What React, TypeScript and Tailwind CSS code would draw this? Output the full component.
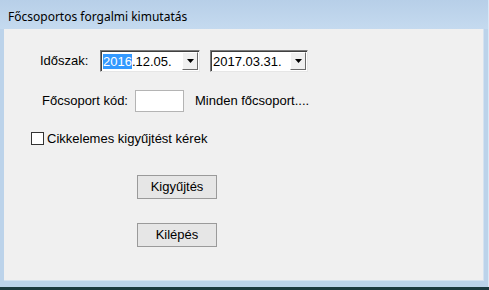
const ui = { fontFamily: '"Liberation Sans", Arial, sans-serif' };
const title = { fontFamily: '"Noto Sans", "Open Sans", sans-serif' };

function Arrow() {
  return (
    <svg width="7" height="4" viewBox="0 0 7 4">
      <path d="M0 0h7L3.5 4z" fill="#000" />
    </svg>
  );
}

function Combo({ value, highlight, width }: { value: string; highlight?: boolean; width: string }) {
  const head = highlight ? value.slice(0, 4) : "";
  const rest = highlight ? value.slice(4) : value;
  return (
    <div
      className={`${width} h-[22px] flex items-center bg-white border border-t-[#7a7a7a] border-l-[#7a7a7a] border-b-[#e6e6e6] border-r-[#e6e6e6] shadow-[inset_1px_1px_0_#404040]`}
    >
      <div className="flex-1 pl-[2px] text-[13px] leading-none text-black">
        {highlight && <span className="bg-[#3399ff] text-white">{head}</span>}
        {rest}
      </div>
      <div className="w-[16px] h-[18px] mr-[1px] flex items-center justify-center bg-[#f0f0f0] border border-t-white border-l-white border-b-[#696969] border-r-[#696969]">
        <Arrow />
      </div>
    </div>
  );
}

function Button({ label }: { label: string }) {
  return (
    <button className="w-[80px] h-[24px] bg-[#e6e6e6] border border-[#9a9a9a] text-[13px] text-black leading-none">
      {label}
    </button>
  );
}

export default function App() {
  return (
    <div className="w-[489px] h-[290px] flex flex-col bg-[#1c3a3f]" style={ui}>
      <div className="h-[287px] flex flex-col bg-[#bcd3ea] border-r border-[#d9e8f6]">
        {/* Title bar */}
        <div
          className="h-[29px] shrink-0 pl-[8px] pt-[8px] text-[12px] text-black bg-gradient-to-b from-[#b7cfe8] to-[#c5daef]"
          style={title}
        >
          Főcsoportos forgalmi kimutatás
        </div>

        <div className="flex-1 flex px-[4px] pb-[6px]">
          <div className="flex-1 bg-[#f0f0f0] border-r border-b border-[#d4e2f1] text-[13px] text-black">
            {/* Időszak */}
            <div className="flex items-center mt-[21px] ml-[36px]">
              <span className="w-[60px]">Időszak:</span>
              <Combo value="2016.12.05." highlight width="w-[100px]" />
              <div className="w-[10px]" />
              <Combo value="2017.03.31." width="w-[98px]" />
            </div>

            {/* Főcsoport kód */}
            <div className="flex items-center mt-[18px] ml-[38px]">
              <span className="w-[93px]">Főcsoport kód:</span>
              <div className="w-[49px] h-[22px] bg-white border border-[#b4b4b4]" />
              <span className="ml-[11px]">Minden főcsoport....</span>
            </div>

            {/* Checkbox */}
            <div className="flex items-center mt-[17px] ml-[27px]">
              <div className="w-[13px] h-[13px] bg-white border border-[#333]" />
              <span className="ml-[3px]">Cikkelemes kigyűjtést kérek</span>
            </div>

            <div className="flex flex-col gap-[24px] mt-[26px] ml-[133px]">
              <Button label="Kigyűjtés" />
              <Button label="Kilépés" />
            </div>
          </div>
        </div>
      </div>
    </div>
  );
}
